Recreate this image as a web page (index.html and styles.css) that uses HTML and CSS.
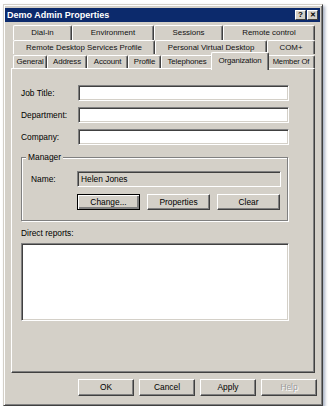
FILE: index.html
```html
<!DOCTYPE html>
<html>
<head>
<meta charset="utf-8">
<link rel="stylesheet" href="styles.css">
</head>
<body>
<div class="window">
  <div class="titlebar">
    <span class="title">Demo Admin Properties</span>
    <div class="tbtns">
      <span class="tbtn">?</span>
      <span class="tbtn close">✕</span>
    </div>
  </div>

  <div class="tabs">
    <div class="tabrow row1">
      <div class="tab">Dial-in</div>
      <div class="tab">Environment</div>
      <div class="tab">Sessions</div>
      <div class="tab">Remote control</div>
    </div>
    <div class="tabrow row2">
      <div class="tab">Remote Desktop Services Profile</div>
      <div class="tab">Personal Virtual Desktop</div>
      <div class="tab">COM+</div>
    </div>
    <div class="tabrow row3">
      <div class="tab">General</div>
      <div class="tab">Address</div>
      <div class="tab">Account</div>
      <div class="tab">Profile</div>
      <div class="tab">Telephones</div>
      <div class="tab selected">Organization</div>
      <div class="tab last">Member Of</div>
    </div>
  </div>

  <div class="panel">
    <div class="fields">
      <div class="frow"><span class="lbl">Job Title:</span><span class="edit"></span></div>
      <div class="frow"><span class="lbl">Department:</span><span class="edit"></span></div>
      <div class="frow"><span class="lbl">Company:</span><span class="edit"></span></div>
    </div>

    <div class="group">
      <span class="legend">Manager</span>
      <div class="nrow"><span class="nlbl">Name:</span><span class="edit ro">Helen Jones</span></div>
      <div class="gbtns">
        <span class="btn default">Change...</span>
        <span class="btn">Properties</span>
        <span class="btn">Clear</span>
      </div>
    </div>

    <div class="dlabel">Direct reports:</div>
    <div class="listbox"></div>
  </div>

  <div class="footer">
    <span class="btn fbtn">OK</span>
    <span class="btn fbtn">Cancel</span>
    <span class="btn fbtn">Apply</span>
    <span class="btn fbtn disabled">Help</span>
  </div>
</div>
</body>
</html>
```

FILE: styles.css
```css
* { box-sizing: border-box; }
html, body { margin: 0; padding: 0; background: #ffffff; }
body {
  padding: 4px 0 0 3px;
  font-family: "Liberation Sans", Arial, sans-serif;
  font-size: 8.4px;
  color: #000;
}

.window {
  width: 320px;
  height: 402px;
  background: #d4d0c8;
  border: 1px solid;
  border-color: #d4d0c8 #404040 #404040 #d4d0c8;
  box-shadow: inset 1px 1px #ffffff, inset -1px -1px #808080, 2px 2px 3px rgba(60, 80, 120, 0.45);
  padding: 2px 2px 0 1px;
}

.titlebar {
  height: 14px;
  margin-top: 1px;
  background: #0c2a6c;
  display: flex;
  align-items: center;
  justify-content: space-between;
  padding: 0 2px 0 2px;
}
.title {
  color: #fff;
  font-weight: bold;
  font-size: 9px;
}
.tbtns { display: flex; gap: 1px; }
.tbtn {
  width: 11px;
  height: 10px;
  background: #d4d0c8;
  border: 1px solid;
  border-color: #fff #404040 #404040 #fff;
  font-size: 8px;
  font-weight: bold;
  line-height: 8px;
  text-align: center;
  color: #000;
}
.tbtn.close { font-size: 7px; }

.tabs {
  margin: 3px 0 0 8px;
  width: 302px;
  font-size: 7.9px;
}
.tabrow { display: grid; }
.row1 { grid-template-columns: 59px 82px 69px 92px; height: 15px; }
.row2 { grid-template-columns: 142px 112px 48px; height: 14px; }
.row3 { grid-template-columns: 34px 40px 41px 33px 52px 54px 48px; height: 14px; letter-spacing: -0.15px; }

.tab {
  background: #d4d0c8;
  border-top: 1px solid #fff;
  border-left: 1px solid #fff;
  border-right: 1px solid #404040;
  box-shadow: inset -1px 0 #808080;
  border-radius: 2px 2px 0 0;
  text-align: center;
  white-space: nowrap;
  line-height: 13px;
  color: #111;
}
.row3 .tab { margin-top: 1px; line-height: 12px; }
.row3 .tab.last { font-size: 7.6px; }
.row3 .tab.selected {
  position: relative;
  z-index: 1;
  margin: -2px -2px -2px -2px;
  line-height: 16px;
  padding-bottom: 1px;
}

.panel {
  margin: 0 0 0 6px;
  width: 304px;
  height: 305px;
  border: 1px solid;
  border-color: #fff #404040 #404040 #fff;
  box-shadow: inset -1px -1px #808080;
  padding: 16px 0 0 9px;
}

.fields { display: flex; flex-direction: column; gap: 6px; }
.frow { display: flex; align-items: center; height: 16px; }
.lbl { width: 57px; }
.edit {
  display: block;
  width: 211px;
  height: 16px;
  background: #fff;
  border: 1px solid;
  border-color: #808080 #fff #fff #808080;
  box-shadow: inset 1px 1px #404040, inset -1px -1px #d4d0c8;
}

.group {
  position: relative;
  margin-top: 12px;
  width: 267px;
  height: 64px;
  border: 1px solid #808080;
  box-shadow: inset 1px 1px #fff, 1px 1px #fff;
  padding: 13px 0 0 9px;
}
.legend {
  position: absolute;
  top: -6px;
  left: 4px;
  padding: 0 2px;
  background: #d4d0c8;
  line-height: 10px;
}
.nrow { display: flex; align-items: center; height: 16px; }
.nlbl { width: 46px; }
.edit.ro {
  width: 204px;
  background: #d4d0c8;
  padding-left: 3px;
  line-height: 14px;
}
.gbtns { display: flex; gap: 7px; margin: 7px 0 0 46px; }

.btn {
  display: block;
  height: 16px;
  width: 63px;
  background: #d4d0c8;
  border: 1px solid;
  border-color: #fff #404040 #404040 #fff;
  box-shadow: inset -1px -1px #808080;
  text-align: center;
  line-height: 14px;
}
.btn.default {
  border-color: #000;
  box-shadow: inset 1px 1px #fff, inset -2px -2px #808080;
}

.dlabel { margin-top: 7px; line-height: 10px; }
.listbox {
  margin-top: 5px;
  width: 268px;
  height: 78px;
  background: #fff;
  border: 1px solid;
  border-color: #808080 #fff #fff #808080;
  box-shadow: inset 1px 1px #404040, inset -1px -1px #d4d0c8;
}

.footer {
  display: flex;
  gap: 5px;
  margin: 6px 0 0 73px;
}
.fbtn { width: 56px; height: 17px; line-height: 15px; }
.fbtn.disabled { color: #9a9a9a; text-shadow: 1px 1px #fff; }
```
